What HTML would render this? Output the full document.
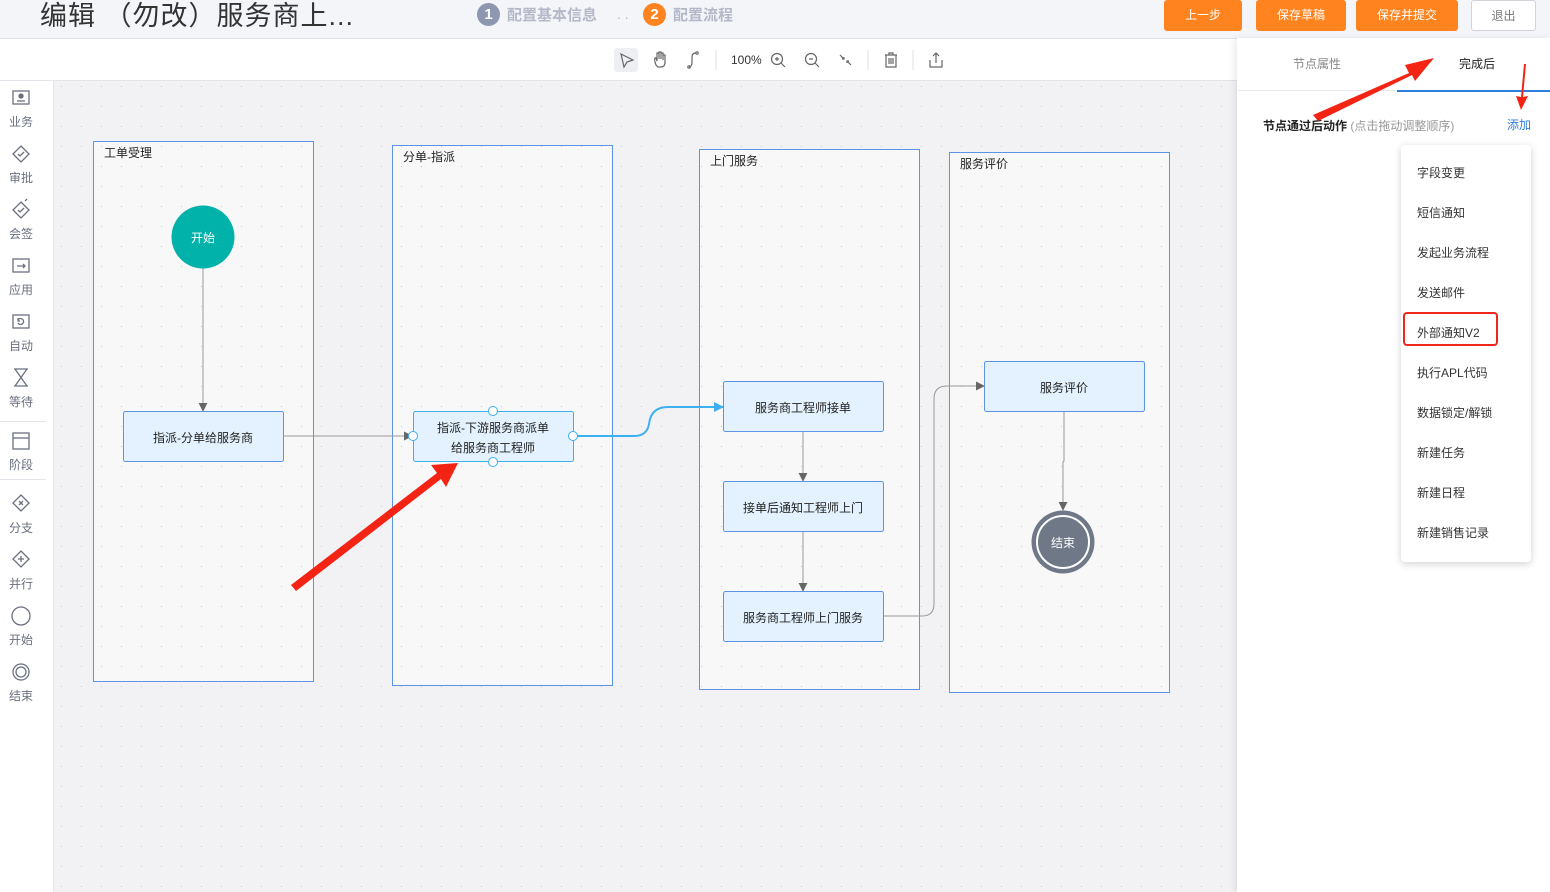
<!DOCTYPE html>
<html><head><meta charset="utf-8"><style>
*{box-sizing:border-box;margin:0;padding:0}
body{width:1550px;height:892px;overflow:hidden;position:relative;background:#f2f2f5;font-family:"Liberation Sans","Noto Sans CJK SC",sans-serif;color:#333}
.abs{position:absolute}
.hdr{left:0;top:0;width:1550px;height:39px;background:#f4f5f9;border-bottom:1px solid #dfe2e8}
.title{left:40px;top:-6px;font-size:27px;color:#333;letter-spacing:1px}
.step{top:3px;height:22px;display:flex;align-items:center;font-size:15px;color:#b4b8c8;font-weight:bold}
.step b{display:inline-block;width:23px;height:23px;border-radius:50%;color:#fff;text-align:center;line-height:23px;font-size:15px;margin-right:7px}
.btn{top:0;height:31px;border-radius:3px;background:#ff8420;color:#fff;font-size:12px;text-align:center;line-height:30px}
.tb{left:0;top:39px;width:1237px;height:42px;background:#fff;border-bottom:1px solid #e3e5ea}
.side{left:0;top:81px;width:54px;height:811px;background:#fff;border-right:1px solid #e3e5ea}
.si{position:absolute;left:0;width:42px;text-align:center;font-size:12px;color:#6b7080}
.si svg{display:block;margin:0 auto 3px}
.panel{left:1237px;top:38px;width:313px;height:854px;background:#fff;box-shadow:-3px 0 6px rgba(0,0,0,.08)}
.menu{left:1401px;top:145px;width:130px;height:417px;background:#fff;border-radius:4px;box-shadow:0 2px 8px rgba(0,0,0,.18)}
.mi{position:absolute;left:16px;font-size:12px;color:#333}
</style></head><body>
<div class="abs hdr"></div>
<div class="abs title">编辑 （勿改）服务商上...</div>
<div class="abs step" style="left:477px"><b style="background:#8e97b0">1</b>配置基本信息</div>
<div class="abs" style="left:617px;top:6px;color:#b4b8c8;font-size:14px">. .</div>
<div class="abs step" style="left:643px"><b style="background:#ff8420">2</b>配置流程</div>
<div class="abs btn" style="left:1164px;width:78px">上一步</div>
<div class="abs btn" style="left:1256px;width:90px">保存草稿</div>
<div class="abs btn" style="left:1356px;width:102px">保存并提交</div>
<div class="abs btn" style="left:1471px;width:65px;background:#fff;border:1px solid #d0d3da;color:#777">退出</div>

<div class="abs tb"></div>
<svg class="abs" style="left:600px;top:40px" width="360" height="40" viewBox="0 0 360 40" fill="none" stroke="#666" stroke-width="1.2">
<rect x="14" y="8" width="24" height="24" rx="3" fill="#eeeff2" stroke="none"/>
<path d="M21 14 L33 20 L27 22 L24 27 Z"/>
<path d="M56 25 Q54 20 55 18 L56 18 L57 21 V13 H59 V19 V12 H61 V19 V13 H63 V20 V15 H65 V22 Q65 27 61 27 H58 Z"/>
<path d="M89 27 Q92 27 92 22 V17 Q92 13 96 13"/><circle cx="89" cy="27" r="1.2"/><circle cx="97" cy="13" r="1.2"/>
<path d="M116 10 V30" stroke="#e3e5ea"/>
<text x="131" y="24" font-size="12" fill="#333" stroke="none" font-family="Liberation Sans">100%</text>
<circle cx="177" cy="19" r="5.5"/><path d="M181 23 L185 27 M175 19 H179 M177 17 V21"/>
<circle cx="211" cy="19" r="5.5"/><path d="M215 23 L219 27 M209 19 H213"/>
<path d="M240 15 L244 19 M244 17 V19 H242 M251 25 L247 21 M247 23 V21 H249"/>
<path d="M268 10 V30" stroke="#e3e5ea"/>
<path d="M285 15 H297 M289 15 V13 H293 V15 M286 15 V27 H296 V15 M289 18 V24 M291 18 V24 M293 18 V24"/>
<path d="M313 10 V30" stroke="#e3e5ea"/>
<path d="M330 20 V27 H342 V20 M336 13 V23 M333 16 L336 13 L339 16"/>
</svg>

<svg class="abs" style="left:54px;top:81px" width="1183" height="811">
<defs>
<pattern id="dots" x="7" y="5" width="20" height="20" patternUnits="userSpaceOnUse"><rect width="1" height="1" fill="#c6c8cf"/></pattern>
<marker id="ar" viewBox="0 0 10 10" refX="9" refY="5" markerWidth="9" markerHeight="9" orient="auto" markerUnits="userSpaceOnUse"><path d="M0 0 L10 5 L0 10 Z" fill="#666"/></marker>
<marker id="arb" viewBox="0 0 10 10" refX="9" refY="5" markerWidth="10" markerHeight="10" orient="auto" markerUnits="userSpaceOnUse"><path d="M0 0 L10 5 L0 10 Z" fill="#3cb0f0"/></marker>
</defs>
<rect width="1183" height="811" fill="#f2f2f5"/>
<g fill="#f8f8f9" stroke="#5b93e6" stroke-width="1">
<rect x="39.5" y="60.5" width="220" height="540"/>
<rect x="338.5" y="64.5" width="220" height="540"/>
<rect x="645.5" y="68.5" width="220" height="540"/>
<rect x="895.5" y="71.5" width="220" height="540"/>
</g>
<rect width="1183" height="811" fill="url(#dots)"/>
<g font-size="12" fill="#222" font-family="Liberation Sans,Noto Sans CJK SC,sans-serif">
<text x="50" y="76">工单受理</text><text x="349" y="80">分单-指派</text><text x="656" y="84">上门服务</text><text x="906" y="87">服务评价</text>
</g>
<g stroke="#999" stroke-width="1" fill="none">
<path d="M149 187 V330" marker-end="url(#ar)"/>
<path d="M229 355 H358" marker-end="url(#ar)"/>
<path d="M749 350 V400" marker-end="url(#ar)"/>
<path d="M749 450 V510" marker-end="url(#ar)"/>
<path d="M829 535 H868 Q880 535 880 523 V318 Q880 305 893 305 H930" marker-end="url(#ar)"/>
<path d="M1010 330 V380 L1009 381 V429" marker-end="url(#ar)"/>
</g>
<path d="M519 355 H580 Q593 355 595 343 Q597 326 614 326 H669" stroke="#3cb0f0" stroke-width="2" fill="none" marker-end="url(#arb)"/>
<circle cx="149" cy="156" r="31.5" fill="#00b2a9"/>
<text x="149" y="161" font-size="12" fill="#fff" text-anchor="middle" font-family="Noto Sans CJK SC,sans-serif">开始</text>
<g fill="#e3f2fe" stroke="#5b93e6" stroke-width="1">
<rect x="69.5" y="330.5" width="160" height="50" rx="2"/>
<rect x="359.5" y="330.5" width="160" height="50" rx="2" stroke="#3cb0f0"/>
<rect x="669.5" y="300.5" width="160" height="50" rx="2"/>
<rect x="669.5" y="400.5" width="160" height="50" rx="2"/>
<rect x="669.5" y="510.5" width="160" height="50" rx="2"/>
<rect x="930.5" y="280.5" width="160" height="50" rx="2"/>
</g>
<g fill="#fff" stroke="#3cb0f0"><circle cx="439" cy="330" r="4.5"/><circle cx="439" cy="381" r="4.5"/><circle cx="359" cy="355" r="4.5"/><circle cx="519" cy="355" r="4.5"/></g>
<g font-size="12" fill="#222" text-anchor="middle" font-family="Liberation Sans,Noto Sans CJK SC,sans-serif">
<text x="149" y="361">指派-分单给服务商</text>
<text x="439" y="351">指派-下游服务商派单</text><text x="439" y="371">给服务商工程师</text>
<text x="749" y="331">服务商工程师接单</text>
<text x="749" y="431">接单后通知工程师上门</text>
<text x="749" y="541">服务商工程师上门服务</text>
<text x="1010" y="311">服务评价</text>
</g>
<circle cx="1009" cy="461" r="31.5" fill="#6f7887"/>
<circle cx="1009" cy="461" r="26" fill="none" stroke="#fff" stroke-width="2"/>
<text x="1009" y="466" font-size="12" fill="#fff" text-anchor="middle" font-family="Noto Sans CJK SC,sans-serif">结束</text>
</svg>

<div class="abs side">
<div style="position:absolute;left:0;top:340px;width:46px;border-top:1px solid #e3e5ea"></div>
<div style="position:absolute;left:0;top:398px;width:46px;border-top:1px solid #e3e5ea"></div>
</div>
<svg class="abs" style="left:0;top:81px" width="54" height="640" fill="none" stroke="#6b7080" stroke-width="1.3">
<rect x="13" y="10" width="16" height="13"/><circle cx="21" cy="15" r="2" fill="#6b7080"/><path d="M17 20 H25"/>
<path d="M21 65 L29 73 L21 81 L13 73 Z M18 73 L20 75 L24 71"/>
<path d="M21 121 L29 129 L21 137 L13 129 Z M18 129 L20 131 L24 127 M25 120 L27 118"/>
<rect x="13" y="178" width="16" height="13"/><path d="M17 185 H25 M23 183 L25 185 L23 187"/>
<rect x="13" y="234" width="16" height="13"/><path d="M18 239 A3 3 0 1 1 18 242 M18 237 V240 H20"/>
<path d="M14 288 H28 M14 305 H28 M15 288 L27 305 M27 288 L15 305"/>
<rect x="13" y="352" width="16" height="16"/><path d="M13 357 H29"/>
<path d="M21 414 L29 422 L21 430 L13 422 Z M19 420 L23 424 M23 420 L19 424"/>
<path d="M21 470 L29 478 L21 486 L13 478 Z M21 475 V481 M18 478 H24"/>
<circle cx="21" cy="535" r="9"/>
<circle cx="21" cy="591" r="8"/><circle cx="21" cy="591" r="5"/>
</svg>
<div class="si" style="top:113px">业务</div>
<div class="si" style="top:169px">审批</div>
<div class="si" style="top:225px">会签</div>
<div class="si" style="top:281px">应用</div>
<div class="si" style="top:337px">自动</div>
<div class="si" style="top:393px">等待</div>
<div class="si" style="top:456px">阶段</div>
<div class="si" style="top:519px">分支</div>
<div class="si" style="top:575px">并行</div>
<div class="si" style="top:631px">开始</div>
<div class="si" style="top:687px">结束</div>

<div class="abs panel">
<div style="position:absolute;left:0;top:52px;width:313px;border-top:1px solid #e8e9ee"></div>
<div style="position:absolute;left:160px;top:52px;width:153px;border-top:2px solid #2f7fe0"></div>
<div style="position:absolute;left:56px;top:17px;font-size:12px;color:#888">节点属性</div>
<div style="position:absolute;left:222px;top:17px;font-size:12px;color:#222">完成后</div>
<div style="position:absolute;left:26px;top:79px;font-size:12px;color:#222;font-weight:bold">节点通过后动作 <span style="font-weight:normal;color:#999">(点击拖动调整顺序)</span></div>
<div style="position:absolute;left:270px;top:78px;font-size:12px;color:#2f7fe0">添加</div>
</div>
<div class="abs menu">
<div class="mi" style="top:19px">字段变更</div>
<div class="mi" style="top:59px">短信通知</div>
<div class="mi" style="top:99px">发起业务流程</div>
<div class="mi" style="top:139px">发送邮件</div>
<div class="mi" style="top:179px">外部通知V2</div>
<div class="mi" style="top:219px">执行APL代码</div>
<div class="mi" style="top:259px">数据锁定/解锁</div>
<div class="mi" style="top:299px">新建任务</div>
<div class="mi" style="top:339px">新建日程</div>
<div class="mi" style="top:379px">新建销售记录</div>
</div>
<div class="abs" style="left:1403px;top:312px;width:95px;height:34px;border:2px solid #f0261c;border-radius:4px"></div>

<svg class="abs" style="left:0;top:0" width="1550" height="892">
<g fill="#f42414">
<path d="M291 585 L437 473 L431 465 L458 463 L446 487 L441 479 L296 591 Z"/>
<path d="M1313 115 L1409 73 L1405 65 L1434 58 L1415 81 L1412 75 L1318 121 Z"/>
<path d="M1524 64 L1526 64 L1523 97 L1528 96 L1521 110 L1516 96 L1521 97 Z"/>
</g>
</svg>
</body></html>
